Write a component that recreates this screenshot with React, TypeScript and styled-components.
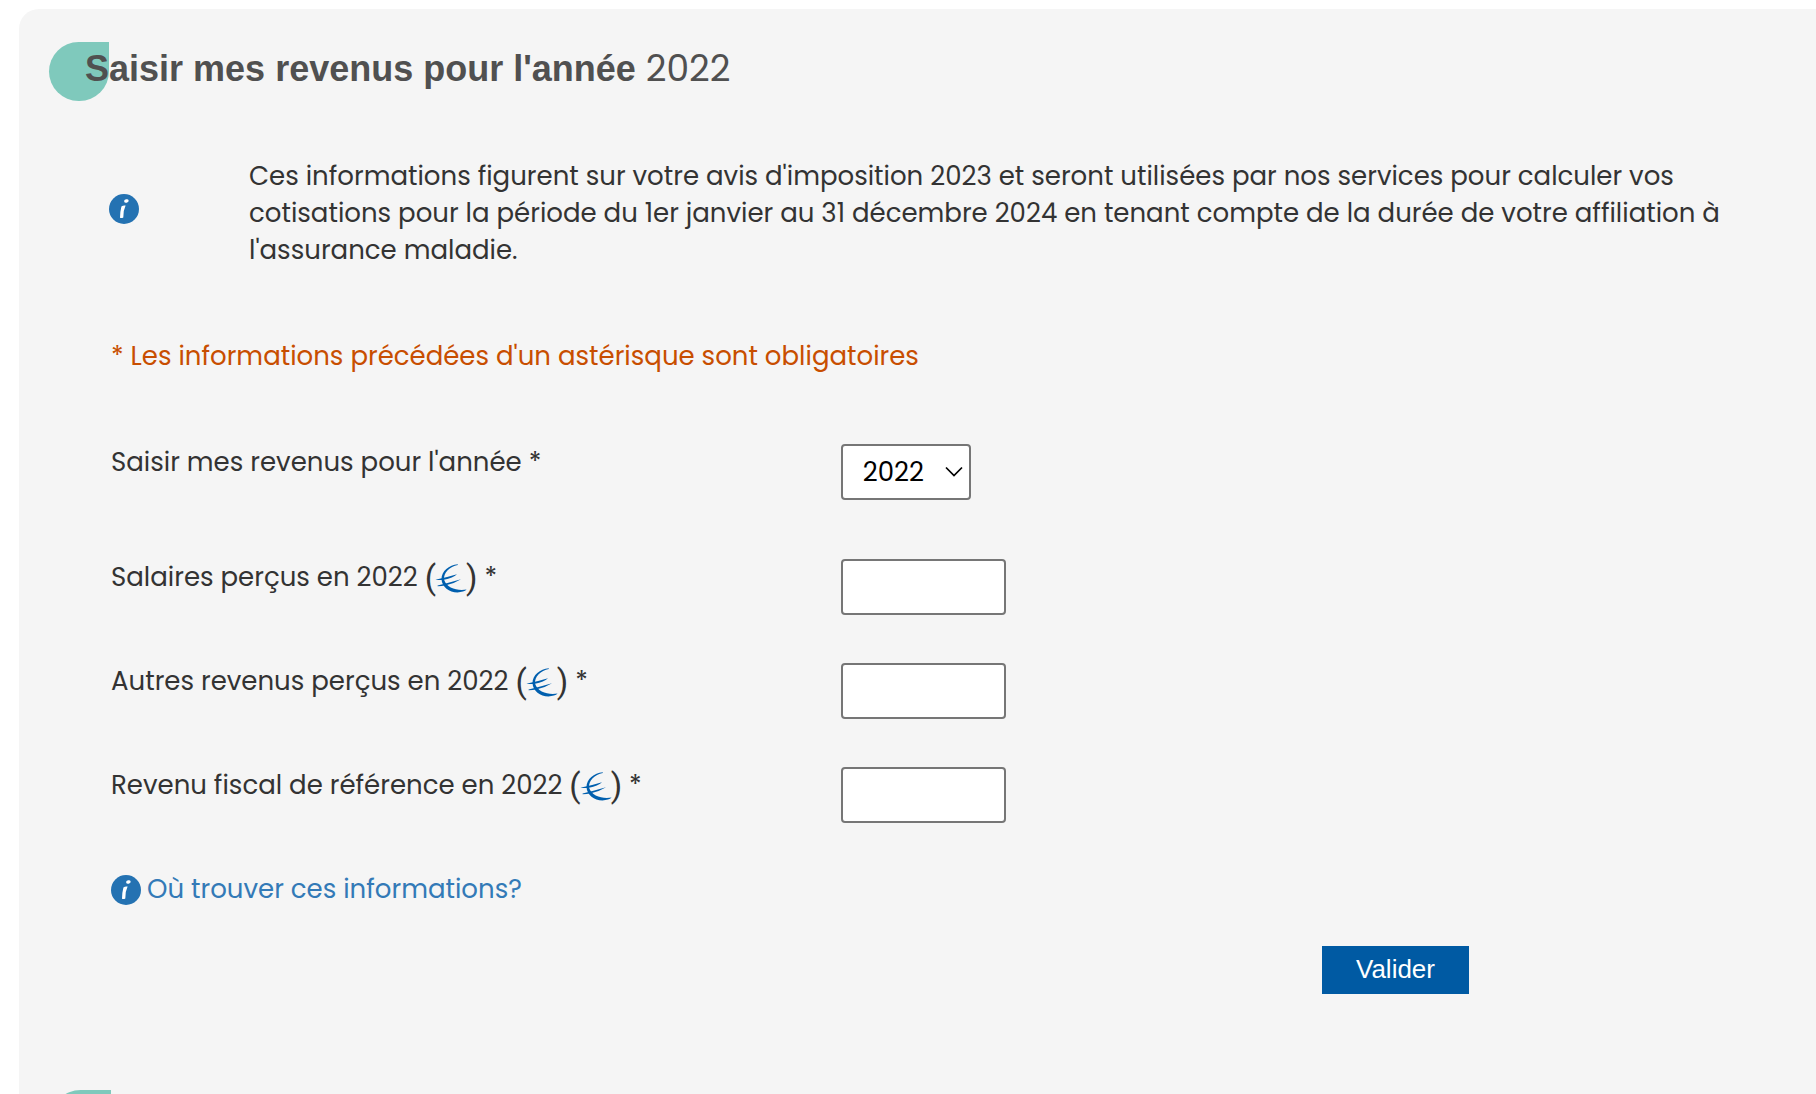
import React from "react";
import styled, { createGlobalStyle } from "styled-components";

const bodyFont = `Poppins, Inter, "Liberation Sans", sans-serif`;
const titleFont = `Arial, "Liberation Sans", sans-serif`;

const GlobalStyle = createGlobalStyle`
  *, *::before, *::after { box-sizing: border-box; }
  body {
    margin: 0;
    background: #ffffff;
    color: #333333;
    font-family: ${bodyFont};
    font-size: 26px;
    line-height: 37px;
    overflow: hidden;
  }
`;

const Page = styled.main`
  padding: 9px 0 0 19px;
`;

const Panel = styled.section`
  height: calc(100vh - 9px);
  overflow: hidden;
  background: #f5f5f5;
  border-radius: 20px 0 0 0;
  padding: 33px 0 0 30px;
`;

const TitleRow = styled.header`
  display: flex;
  align-items: flex-start;
  height: 60px;
`;

const Drop = styled.span`
  flex: none;
  width: 60px;
  height: 59px;
  margin-right: -24px;
  border-radius: 30px 0 30px 30px;
  background: #7fc9bc;
`;

const Title = styled.h2`
  position: relative;
  margin: 0;
  padding-top: 6px;
  color: #505050;
  font-family: ${titleFont};
  font-size: 36px;
  line-height: 42px;
  font-weight: 700;
`;

const TitleYear = styled.span`
  font-family: ${bodyFont};
  font-weight: 400;
`;

const Notice = styled.div`
  display: grid;
  grid-template-columns: 140px minmax(0, 1480px);
  align-items: start;
  margin: 56px 60px 0 60px;
`;

const NoticeIcon = styled.span`
  display: flex;
  padding-top: 36px;
`;

const NoticeText = styled.p`
  margin: 0;
`;

const Form = styled.form`
  padding: 0 2px 0 62px;
`;

const Required = styled.p`
  margin: 69px 0;
  color: #c84e00;
`;

const Field = styled.div<{ $after: number }>`
  display: grid;
  grid-template-columns: 3fr 4fr;
  align-items: start;
  margin-bottom: ${(p) => p.$after}px;
`;

const Label = styled.label`
  display: flex;
  align-items: center;
  height: 37px;
  white-space: pre;
`;

const Paren = styled.span`
  font-family: Roboto, sans-serif;
  font-size: 33px;
`;

const control = `
  height: 56px;
  margin: 0;
  border: 2px solid #767676;
  outline: 0;
  border-radius: 4px;
  background: #ffffff;
  color: #000000;
  font-family: ${bodyFont};
  font-size: 26px;
`;

const SelectBox = styled.div`
  position: relative;
  width: 130px;
`;

const Select = styled.select`
  ${control}
  width: 100%;
  padding: 0 20px;
  appearance: none;
`;

const Chevron = styled.svg`
  position: absolute;
  right: 8px;
  top: 22px;
  pointer-events: none;
`;

const Input = styled.input`
  ${control}
  width: 165px;
  padding: 0 20px;
`;

const HelpLink = styled.a`
  display: inline-flex;
  align-items: center;
  gap: 6px;
  color: #337ab7;
  text-decoration: none;
`;

const Actions = styled.div`
  display: flex;
  justify-content: flex-end;
  padding: 31px 345px 0 0;
`;

const Submit = styled.button`
  width: 147px;
  height: 48px;
  padding: 0;
  border: 0;
  background: #005aa3;
  color: #ffffff;
  font-family: ${titleFont};
  font-size: 26px;
`;

const NextSection = styled.div`
  display: flex;
  margin: 96px 0 0 2px;
`;

function InfoIcon() {
  return (
    <svg width="30" height="30" viewBox="0 0 30 30" aria-hidden="true">
      <circle cx="15" cy="15" r="15" fill="#2472b2" />
      <ellipse cx="17.4" cy="7" rx="2.3" ry="1.7" fill="#fff" transform="rotate(-12 17.4 7)" />
      <path d="M12.4 12.4 Q14.2 11.2 16.6 11.6 Q14.2 16.5 14.3 23.4 Q12.7 24.6 11 23.8 Q11.1 17.2 12.4 12.4Z" fill="#fff" />
    </svg>
  );
}

function EuroIcon() {
  return (
    <svg width="30" height="31" viewBox="1 0 30 31" overflow="visible" aria-hidden="true">
      <g fill="#005fae">
        <path d="M22.8 2.2 C14 3.2 6.5 8.8 6.5 17.2 C7 25 14 30.4 22.5 30.4 C26.5 30.4 30 29.3 31.6 27.6 C22.5 29 11.6 26.6 9 17.6 C8.6 10.2 14.6 4.6 22.8 2.9Z" />
        <path d="M0.4 17.8 Q12 15.2 22 12.2 Q18 15.8 9 17.8 Q4.4 18.4 0.4 17.8Z" />
        <path d="M2.6 23.6 Q14 20.6 26 17.2 Q19 21.6 11 23.2 Q6.6 24 2.6 24.2Z" />
      </g>
    </svg>
  );
}

const amounts = [
  { id: "salaires", label: "Salaires perçus en 2022 " },
  { id: "autres", label: "Autres revenus perçus en 2022 " },
  { id: "reference", label: "Revenu fiscal de référence en 2022 " },
];

export default function App() {
  return (
    <>
      <GlobalStyle />
      <Page>
        <Panel>
          <TitleRow>
            <Drop />
            <Title>
              Saisir mes revenus pour l'année <TitleYear>2022</TitleYear>
            </Title>
          </TitleRow>
          <Notice>
            <NoticeIcon>
              <InfoIcon />
            </NoticeIcon>
            <NoticeText>
              Ces informations figurent sur votre avis d'imposition 2023 et seront utilisées par nos
              services pour calculer vos cotisations pour la période du 1er janvier au 31 décembre
              2024 en tenant compte de la durée de votre affiliation à l'assurance maladie.
            </NoticeText>
          </Notice>
          <Form onSubmit={(e) => e.preventDefault()}>
            <Required>* Les informations précédées d'un astérisque sont obligatoires</Required>
            <Field $after={59}>
              <Label htmlFor="annee">Saisir mes revenus pour l'année *</Label>
              <SelectBox>
                <Select id="annee" defaultValue="2022">
                  <option>2022</option>
                </Select>
                <Chevron width="18" height="12" viewBox="0 0 18 12">
                  <path d="M1 1.5 L9 9.5 L17 1.5" fill="none" stroke="#000" strokeWidth="1.7" />
                </Chevron>
              </SelectBox>
            </Field>
            {amounts.map((a) => (
              <Field key={a.id} $after={48}>
                <Label htmlFor={a.id}>
                  {a.label}
                  <Paren>(</Paren>
                  <EuroIcon />
                  <Paren>)</Paren> *
                </Label>
                <Input id={a.id} type="text" />
              </Field>
            ))}
            <HelpLink href="#aide">
              <InfoIcon />
              Où trouver ces informations?
            </HelpLink>
            <Actions>
              <Submit type="submit">Valider</Submit>
            </Actions>
          </Form>
          <NextSection>
            <Drop />
          </NextSection>
        </Panel>
      </Page>
    </>
  );
}
